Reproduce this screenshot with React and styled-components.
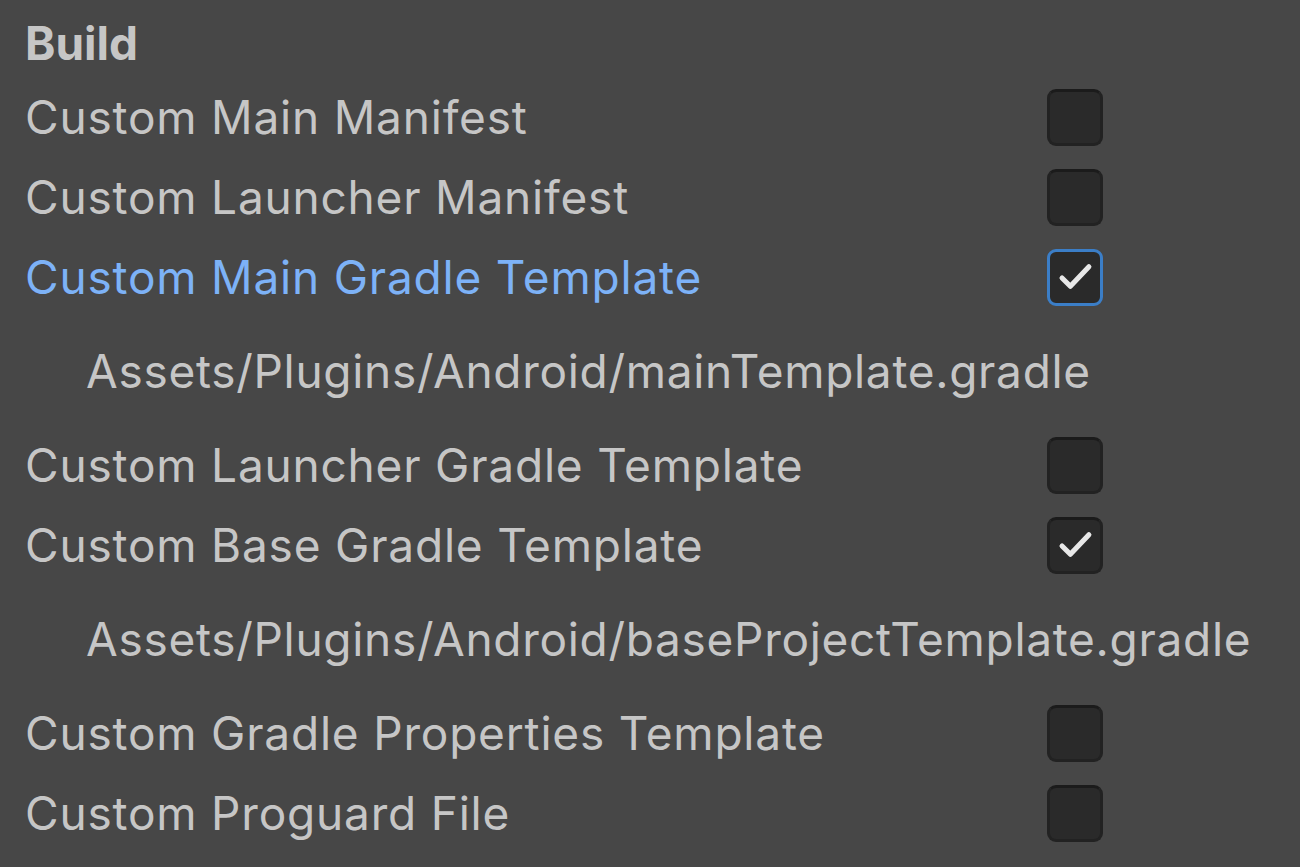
import React from 'react'
import styled, { createGlobalStyle } from 'styled-components'

const rows = [
  { label: 'Custom Main Manifest', checked: false },
  { label: 'Custom Launcher Manifest', checked: false },
  { label: 'Custom Main Gradle Template', checked: true, focused: true, path: 'Assets/Plugins/Android/mainTemplate.gradle' },
  { label: 'Custom Launcher Gradle Template', checked: false },
  { label: 'Custom Base Gradle Template', checked: true, path: 'Assets/Plugins/Android/baseProjectTemplate.gradle' },
  { label: 'Custom Gradle Properties Template', checked: false },
  { label: 'Custom Proguard File', checked: false },
]

const App = () => {
  return (
    <>
      <GlobalStyle />
      <Panel>
        <Title>Build</Title>
        {rows.map((row) => (
          <React.Fragment key={row.label}>
            <Row>
              <Label $focused={row.focused}>{row.label}</Label>
              <Checkbox $focused={row.focused}>
                {row.checked && (
                  <svg width="54" height="54" viewBox="0 0 54 54">
                    <path d="M13 28 L22 37 L42 16" fill="none" stroke="#e8e8e8" strokeWidth="5.5" strokeLinecap="round" strokeLinejoin="round" />
                  </svg>
                )}
              </Checkbox>
            </Row>
            {row.path && <PathRow>{row.path}</PathRow>}
          </React.Fragment>
        ))}
      </Panel>
    </>
  )
}

export default App

const GlobalStyle = createGlobalStyle`
  body {
    margin: 0;
    background: #474747;
    font-family: Inter, "Noto Sans", sans-serif;
  }
`
const Panel = styled.div`
  width: 1300px;
  height: 867px;
  box-sizing: border-box;
  padding: 10px 0 0 25px;
  background: #474747;
  color: #c6c6c6;
  overflow: hidden;
`
const Title = styled.div`
  height: 67px;
  line-height: 67px;
  font-size: 46px;
  font-weight: 700;
`
const Row = styled.div`
  display: grid;
  grid-template-columns: 1022px 56px;
  align-items: center;
  height: 80px;
`
const Label = styled.div`
  font-size: 46px;
  letter-spacing: 0.8px;
  color: ${(p) => (p.$focused ? '#7db2f7' : '#c6c6c6')};
  white-space: nowrap;
`
const Checkbox = styled.div`
  width: 56px;
  height: 57px;
  box-sizing: border-box;
  border-radius: 9px;
  background: #2a2a2a;
  border: 3px solid ${(p) => (p.$focused ? '#3b7ec7' : '#222222')};
  border-top-color: ${(p) => (p.$focused ? '#3b7ec7' : '#1b1b1b')};
  display: flex;
  align-items: center;
  justify-content: center;
`
const PathRow = styled.div`
  height: 108px;
  line-height: 108px;
  padding-left: 61px;
  font-size: 46px;
  letter-spacing: 0.7px;
  color: #c6c6c6;
  white-space: nowrap;
`
